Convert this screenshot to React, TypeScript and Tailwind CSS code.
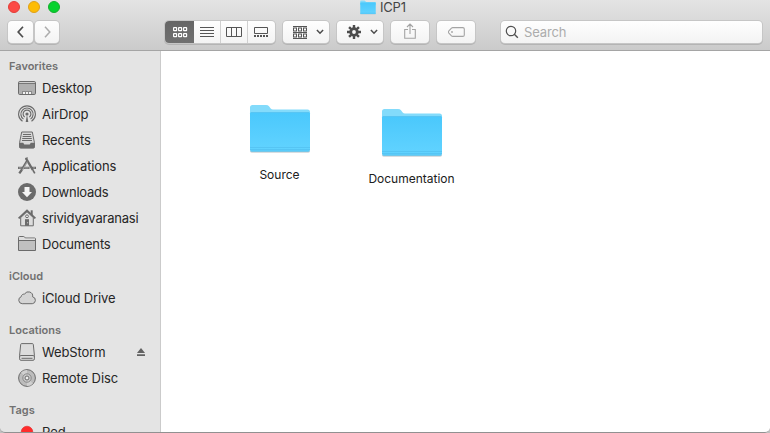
import type { ReactNode } from "react";

const font = "font-['Inter','Liberation_Sans',sans-serif]";
const btn =
  "h-[22px] flex items-center justify-center rounded-[4px] bg-linear-to-b from-[#fefefe] to-[#f3f3f3] shadow-[0_0_0_1px_#c6c6c6,0_1px_0_1px_#b4b4b4]";

function Grid({ y = 0, color }: { y?: number; color: string }) {
  return (
    <g fill="none" stroke={color} strokeWidth="1.2">
      {[0, 5, 10].map((x) =>
        [0, 6].map((dy) => <rect key={`${x}-${dy}`} x={x + 0.6} y={y + dy + 0.6} width="3" height="3" rx=".4" />),
      )}
    </g>
  );
}

function Chevron() {
  return (
    <svg className="relative -left-px" width="8" height="6" viewBox="0 0 8 6" fill="none" stroke="#4c4c4c" strokeWidth="1.5">
      <path d="M.9 1 4 4.200 7.100 1" />
    </svg>
  );
}

function Folder({ id, className }: { id: string; className: string }) {
  return (
    <svg className={className} viewBox="0 0 62 52" preserveAspectRatio="none">
      <defs>
        <linearGradient id={id} x1="0" x2="0" y1="0" y2="1">
          <stop offset="0" stopColor="#4ac8fc" />
          <stop offset="1" stopColor="#62d3ff" />
        </linearGradient>
      </defs>
      <path d="M1 46h60v2q0 2-3 2H4q-3 0-3-2z" fill="#c9cfd3" opacity=".7" />
      <path d="M1 10V4.500q0-2.500 2.500-2.500H17q2 0 3 1.300l1.700 2.200Q22.500 6.500 24 6.500h34.500Q61 6.500 61 9v8H1z" fill="#83dbfb" />
      <path d="M1 10.500Q1 9 2.500 9h57Q61 9 61 10.500v36q0 2-2 2H3q-2 0-2-2z" fill={`url(#${id})`} />
      <path d="M1 44.500h60M1 46.500h60" stroke="#4fbcec" strokeWidth=".6" />
      <path d="M1.500 48.200h59" stroke="#47b4e4" strokeWidth=".7" />
      <path d="M2 9.500h58" stroke="#5cc4f0" strokeWidth=".8" />
    </svg>
  );
}

function Icon({ children }: { children: ReactNode }) {
  return (
    <svg className="h-[18px] w-[18px] shrink-0" viewBox="0 0 18 18" fill="none" stroke="#6b6b6b" strokeWidth="1">
      {children}
    </svg>
  );
}

const icons = {
  desktop: (
    <Icon>
      <rect x=".5" y="2.500" width="17" height="13" rx="1.200" fill="#b0b0b0" />
      <path d="M1.500 3.500h15" stroke="#cfcfcf" />
      <path d="M1 4.500h16" stroke="#777" />
      <path d="M4 12h10v3H4z" fill="#8a8a8a" stroke="none" />
      <path d="M5 13h2v2H5zM8 13h2v2H8zM11 13h2v2h-2z" fill="#f2f2f2" stroke="none" />
    </Icon>
  ),
  airdrop: (
    <Icon>
      <g strokeWidth="1.150">
        <path d="M4.500 16.300a8.400 8.400 0 1 1 9 0" />
        <path d="M5.500 14.100a6.100 6.100 0 1 1 7 0" />
        <path d="M6.700 12.100a3.900 3.900 0 1 1 4.600 0" />
      </g>
      <path d="m9 9.500 1.300 7.500H7.700z" fill="#6b6b6b" stroke="none" />
      <circle cx="9" cy="9" r="1.600" fill="#6b6b6b" stroke="none" />
    </Icon>
  ),
  recents: (
    <Icon>
      <path d="M3.700 1h10.600l2.100 10.500v4.300q0 1.200-1.200 1.200H2.800q-1.200 0-1.200-1.200v-4.300z" fill="#d9d9d9" />
      <path d="M5 3.500h8M4.600 5.500h8.800M4.200 7.500h9.600M4 9.500h10" />
      <path d="M1.200 11.700h4l1.100 1.800h5.400l1.100-1.800h4v4q0 1.500-1.500 1.500H2.700q-1.500 0-1.500-1.500z" fill="#6b6b6b" stroke="none" />
    </Icon>
  ),
  applications: (
    <Icon>
      <path d="M9.300 3.500 3.300 13.500 1.300 16.300" strokeWidth="2.300" />
      <path d="M8 1.300 14.800 13" strokeWidth="2.300" />
      <path d="m14.800 13 2 3.400" strokeWidth="1.600" />
      <path d="M0 10.900h11.500M13.800 10.900H18" strokeWidth="2.400" />
      <path d="M7.200 1.600 9.800.700" strokeWidth="1.200" />
      <path d="m9.300 4.800-5 8.400M.8 10.900h2.700M6.600 10.900h4M15 10.900h2" stroke="#cfcfcf" strokeWidth=".6" />
    </Icon>
  ),
  downloads: (
    <Icon>
      <circle cx="9" cy="9" r="9" fill="#6b6b6b" stroke="none" />
      <path d="M6.500 4h5v5H14l-5 5.200L4 9h2.500z" fill="#f5f5f5" stroke="none" />
    </Icon>
  ),
  home: (
    <Icon>
      <path d="M12.700 1.300h2v5h-2z" fill="#6b6b6b" stroke="none" />
      <path d="M2.700 8.500v8.300h12.600V8.500L9 2.700z" fill="#ddd" />
      <path d="M.6 9.400 9 1.600l8.400 7.800" strokeWidth="1.900" />
      <path d="M7 10.200h4v6.600H7z" fill="#6b6b6b" stroke="none" />
      <circle cx="9" cy="7.300" r="1.400" fill="#f2f2f2" />
      <path d="M9.200 13.200h.9v1h-.9z" fill="#ddd" stroke="none" />
    </Icon>
  ),
  documents: (
    <Icon>
      <path d="M.5 15.500V2.500q0-1 1-1h4q.8 0 1.300.8l.6.700h9.100q1 0 1 1v11.500z" fill="#c0c0c0" />
      <path d="M1 5V2h4.700L7 3.600h10V5z" fill="#dedede" stroke="none" />
      <path d="M.8 5.500h16.400" />
    </Icon>
  ),
  cloud: (
    <Icon>
      <path d="M4.200 14.700a3.600 3.600 0 0 1-1-7.000A2.700 2.700 0 0 1 6.500 5.200a4.300 4.300 0 0 1 8.100 2.600 3.500 3.500 0 0 1-.3 6.900z" fill="#d4d4d4" />
    </Icon>
  ),
  drive: (
    <Icon>
      <path d="M3.600.6h10.800q.8 0 .9.800l1.100 10.800v3.700q0 1.400-1.400 1.400H3q-1.400 0-1.400-1.400v-3.700L2.700 1.400q.1-.8.900-.8z" fill="#dcdcdc" />
      <path d="M1.800 13.500q0-1 1-1h12.400q1 0 1 1M3.500 15.300h11" />
    </Icon>
  ),
  disc: (
    <Icon>
      <circle cx="9" cy="9" r="8.400" fill="#bcbcbc" />
      <path d="M9 9 3 3.500A8 8 0 0 1 9 1zM9 9l6 5.500A8 8 0 0 1 9 17z" fill="#d0d0d0" stroke="none" />
      <circle cx="9" cy="9" r="4.200" fill="#ccc" stroke="#888" />
      <circle cx="9" cy="9" r="2" fill="#eee" />
    </Icon>
  ),
  red: (
    <Icon>
      <circle cx="9" cy="9" r="5.800" fill="#ff2c2c" stroke="#e32424" strokeWidth=".6" />
    </Icon>
  ),
};

function Heading({ children, className = "" }: { children: ReactNode; className?: string }) {
  return <div className={`h-[18px] pl-[9px] text-[11px] font-semibold leading-[18px] text-[#717171] ${className}`}>{children}</div>;
}

function Item({ icon, label, tracking = "", eject }: { icon: ReactNode; label: string; tracking?: string; eject?: boolean }) {
  return (
    <div className="flex h-[26px] items-center pr-[15px] pl-[18px]">
      {icon}
      <span className={`ml-[6px] flex-1 whitespace-nowrap text-[13px] leading-[18px] text-[#262626] ${tracking}`}>{label}</span>
      {eject && (
        <svg width="8" height="8" viewBox="0 0 8 8" fill="#626262">
          <path d="m4 0 4 5H0zM0 6.300h8V8H0z" />
        </svg>
      )}
    </div>
  );
}

export default function App() {
  return (
    <div className={`relative flex h-[433px] w-[770px] flex-col overflow-hidden bg-white ${font}`}>
      <header className="flex h-[51px] shrink-0 flex-col border-b border-[#a5a5a5] bg-linear-to-b from-[#e4e4e4] to-[#cbcbcb]">
        <div className="flex h-[14px] items-center pl-[8px]">
          <div className="flex gap-[8px]">
            <span className="h-[12px] w-[12px] rounded-full border border-[#e33e38] bg-[#fc4944]" />
            <span className="h-[12px] w-[12px] rounded-full border border-[#e0a018] bg-[#fdbc06]" />
            <span className="h-[12px] w-[12px] rounded-full border border-[#14ae2d] bg-[#05d22e]" />
          </div>
          <Folder id="title" className="ml-[300px] h-[15px] w-[16px]" />
          <span className="ml-[4px] text-[13px] leading-[14px] tracking-[-0.2px] text-[#454545]">ICP1</span>
        </div>
        <div className="mt-[7px] flex pl-[8px]">
          <div className="flex gap-[2px]">
            <div className={`${btn} w-[25px]`}>
              <svg width="7" height="12" viewBox="0 0 7 12" fill="none" stroke="#4d4d4d" strokeWidth="1.700"><path d="M6 .7 1.200 6 6 11.300" /></svg>
            </div>
            <div className={`${btn} w-[24px]`}>
              <svg width="7" height="12" viewBox="0 0 7 12" fill="none" stroke="#acacac" strokeWidth="1.500"><path d="m1 .7 4.800 5.300L1 11.300" /></svg>
            </div>
          </div>
          <div className={`${btn} ml-[106px] w-[110px] overflow-hidden`}>
            <div className="flex h-full w-[29px] items-center justify-center bg-linear-to-b from-[#666] to-[#707070] pl-px">
              <svg width="15" height="11" viewBox="0 0 15 11"><Grid color="#fff" /></svg>
            </div>
            <div className="flex h-full w-[26px] items-center justify-center">
              <svg width="14" height="10" viewBox="0 0 14 10" stroke="#555"><path d="M0 .5h14M0 3.500h14M0 6.500h14M0 9.500h14" /></svg>
            </div>
            <div className="flex h-full w-[27px] items-center justify-center border-l border-[#d0d0d0]">
              <svg width="16" height="10" viewBox="0 0 16 10" fill="none" stroke="#555"><path d="M.5.5h15v9H.5zM5.500.5v9M10.500.5v9" /></svg>
            </div>
            <div className="flex h-full w-[28px] items-center justify-center border-l border-[#d0d0d0] pr-px">
              <svg width="14" height="10" viewBox="0 0 14 10" fill="none" stroke="#555">
                <path d="M.5.5h13v6H.5z" />
                <path d="M0 9h14" strokeWidth="2" strokeDasharray="2 1" />
              </svg>
            </div>
          </div>
          <div className={`${btn} ml-[8px] w-[46px] gap-[10px] pl-[5px]`}>
            <svg width="14" height="14" viewBox="0 0 14 14">
              <path d="M0 1.500h14M0 7.500h14M0 13.500h14" stroke="#555" />
              <g fill="none" stroke="#555" strokeWidth="1">
                {[0.5, 5.5, 10.5].map((x) => [3, 9].map((y) => <rect key={`${x}-${y}`} x={x} y={y} width="3" height="3" />))}
              </g>
            </svg>
            <Chevron />
          </div>
          <div className={`${btn} ml-[8px] w-[46px] gap-[10px] pl-[5px]`}>
            <svg width="14" height="14" viewBox="0 0 14 14" fill="none" stroke="#4c4c4c">
              <circle cx="7" cy="7" r="3.300" strokeWidth="2.800" />
              {[0, 45, 90, 135].map((a) => <path key={a} d="M7 0v3M7 11v3" strokeWidth="2.400" transform={`rotate(${a} 7 7)`} />)}
            </svg>
            <Chevron />
          </div>
          <div className={`${btn} ml-[8px] w-[38px]`}>
            <svg className="mb-[2px]" width="12" height="16" viewBox="0 0 12 16" fill="none" stroke="#a4a4a4" strokeWidth="1.100"><path d="M4 6.500H.7v8.800h10.600V6.500H8M6 11V1M3 4l3-3 3 3" /></svg>
          </div>
          <div className={`${btn} ml-[8px] w-[38px]`}>
            <svg width="17" height="10" viewBox="0 0 17 10" fill="none" stroke="#a4a4a4" strokeWidth="1.100"><path d="M4.800.6h10q1.500 0 1.500 1.500v5.800q0 1.500-1.500 1.500h-10Q4 9.400 3.500 8.900L.7 5.900Q0 5 .7 4.100l2.800-3Q4 .6 4.800.6z" /><circle cx="4" cy="5" r=".9" fill="#a4a4a4" stroke="none" /></svg>
          </div>
          <div className={`${btn} ml-[26px] w-[261px] justify-start! pl-[4px]`}>
            <svg width="14" height="14" viewBox="0 0 14 14" fill="none" stroke="#505050" strokeWidth="1.200"><circle cx="6" cy="6" r="4.700" /><path d="m9.300 9.300 3.500 3.500" strokeWidth="1.400" /></svg>
            <span className="ml-[5px] text-[13px] leading-[18px] tracking-[-0.15px] text-[#acacac]">Search</span>
          </div>
        </div>
      </header>
      <div className="flex min-h-0 flex-1">
        <aside className="w-[161px] shrink-0 overflow-hidden border-r border-[#cbcbcb] bg-[#e4e4e4] pt-[6px]">
          <Heading>Favorites</Heading>
          <Item icon={icons.desktop} label="Desktop" tracking="tracking-[-0.1px]" />
          <Item icon={icons.airdrop} label="AirDrop" tracking="tracking-[-0.1px]" />
          <Item icon={icons.recents} label="Recents" tracking="tracking-[-0.1px]" />
          <Item icon={icons.applications} label="Applications" tracking="tracking-[-0.12px]" />
          <Item icon={icons.downloads} label="Downloads" tracking="tracking-[-0.22px]" />
          <Item icon={icons.home} label="srividyavaranasi" tracking="tracking-[-0.2px]" />
          <Item icon={icons.documents} label="Documents" tracking="tracking-[-0.15px]" />
          <Heading className="mt-[10px]">iCloud</Heading>
          <Item icon={icons.cloud} label="iCloud Drive" tracking="tracking-[-0.15px]" />
          <Heading className="mt-[10px]">Locations</Heading>
          <Item icon={icons.drive} label="WebStorm" tracking="tracking-[-0.12px]" eject />
          <Item icon={icons.disc} label="Remote Disc" tracking="tracking-[-0.1px]" />
          <Heading className="mt-[10px]">Tags</Heading>
          <Item icon={icons.red} label="Red" />
        </aside>
        <main className="flex flex-1 items-start pt-[52px] pl-[58px]">
          <div className="flex w-[120px] flex-col items-center">
            <Folder id="source" className="ml-[2px] h-[52px] w-[62px]" />
            <span className="mt-[11px] ml-[1px] text-[12px] leading-[18px] text-[#202020]">Source</span>
          </div>
          <div className="mt-[4px] ml-[12px] flex w-[120px] flex-col items-center">
            <Folder id="documentation" className="ml-[2px] h-[52px] w-[62px]" />
            <span className="mt-[11px] ml-[1px] text-[12px] leading-[18px] text-[#202020]">Documentation</span>
          </div>
        </main>
      </div>
      <div className="pointer-events-none absolute inset-x-0 bottom-0 h-[12px] rounded-b-[5px] border-b border-[#919191] shadow-[0_4px_0_3px_#c0c0c0]" />
    </div>
  );
}
